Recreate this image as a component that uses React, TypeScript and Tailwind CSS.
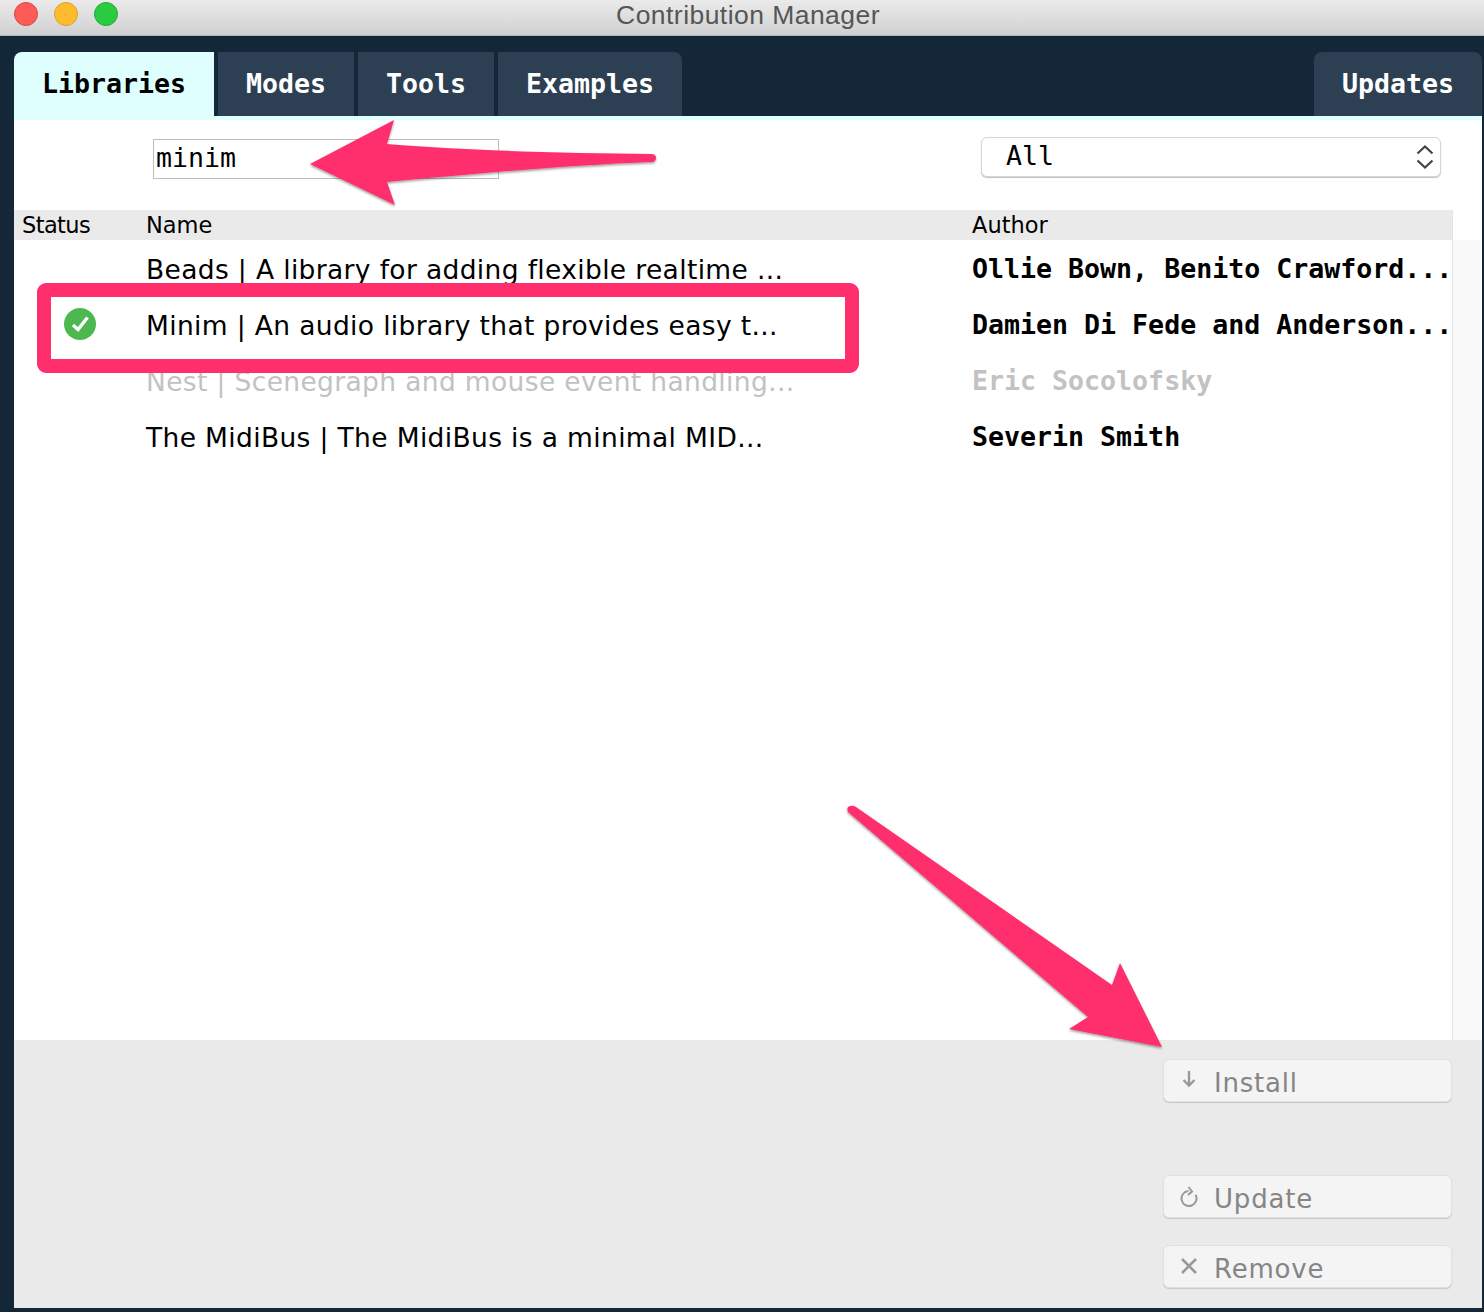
const uiFont = "font-['DejaVu_Sans',sans-serif]";
const monoFont = "font-['DejaVu_Sans_Mono',monospace]";

const rows = [
  {
    name: "Beads | A library for adding flexible realtime ...",
    author: "Ollie Bown, Benito Crawford...",
  },
  {
    name: "Minim | An audio library that provides easy t...",
    author: "Damien Di Fede and Anderson...",
    installed: true,
  },
  {
    name: "Nest | Scenegraph and mouse event handling...",
    author: "Eric Socolofsky",
    muted: true,
  },
  {
    name: "The MidiBus | The MidiBus is a minimal MID...",
    author: "Severin Smith",
  },
];

function Tab({
  label,
  width,
  active,
  first,
  last,
}: {
  label: string;
  width: string;
  active?: boolean;
  first?: boolean;
  last?: boolean;
}) {
  return (
    <div
      className={`flex items-center justify-center text-[26.6px] font-bold ${monoFont} ${width} ${
        active ? "h-[68px] bg-[#dfffff] pb-1 text-black" : "h-16 bg-[#2d4053] text-white"
      } ${first ? "rounded-tl-lg" : ""} ${last ? "rounded-tr-lg" : ""}`}
    >
      {label}
    </div>
  );
}

function ActionButton({
  label,
  icon,
  className,
}: {
  label: string;
  icon: React.ReactNode;
  className?: string;
}) {
  return (
    <div
      className={`flex h-[43px] w-[289px] items-center rounded-md border border-[#e0e0e0] bg-[#f4f4f4] shadow-[0_1px_1px_rgba(0,0,0,0.15)] ${className ?? ""}`}
    >
      <span className="flex w-[50px] justify-center">{icon}</span>
      <span className={`mt-1 text-[26px] leading-none tracking-[0.8px] text-[#858585] ${uiFont}`}>
        {label}
      </span>
    </div>
  );
}

function InstallIcon() {
  return (
    <svg width="20" height="20" viewBox="0 0 20 20" fill="none" stroke="#999" strokeWidth="2.4" className="-mt-1">
      <path d="M10 2 V16" />
      <path d="M4.5 11 L10 16.5 L15.5 11" />
    </svg>
  );
}

function UpdateIcon() {
  return (
    <svg width="20" height="22" viewBox="0 0 20 22" fill="none" stroke="#999" strokeWidth="2" className="-mt-[2px]">
      <path d="M9.5 6 A7.5 7.5 0 1 0 16.5 9.75" />
      <path d="M9.5 2 L13 6.5 L9 10" />
    </svg>
  );
}

function RemoveIcon() {
  return (
    <svg width="20" height="20" viewBox="0 0 20 20" fill="none" stroke="#999" strokeWidth="2.6" className="-mt-[1px]">
      <path d="M3 3 L17 17 M17 3 L3 17" />
    </svg>
  );
}

function Annotations() {
  return (
    <svg
      className="pointer-events-none absolute inset-0"
      width="1484"
      height="1312"
      viewBox="0 0 1484 1312"
    >
      <defs>
        <filter id="arrowShadow" x="-10%" y="-10%" width="120%" height="120%">
          <feDropShadow dx="0" dy="1.5" stdDeviation="1.2" floodColor="#000" floodOpacity="0.4" />
        </filter>
      </defs>
      <path
        filter="url(#arrowShadow)"
        fill="#ff2f6d"
        d="M310 164 L394 120 L387 144 C470 151 570 153 651 154 Q656 154 656 158 Q656 162 651 162 C570 165 470 174 387 182 L395 205 Z"
      />
      <path
        filter="url(#arrowShadow)"
        fill="#ff2f6d"
        d="M848 812 Q846 807 850 806 Q853 805 856 807 L1112 985 L1120 963 L1162 1047 L1069 1029 L1088 1017 Z"
      />
      <rect x="44" y="290" width="808" height="76" rx="2" fill="none" stroke="#ff2f6d" strokeWidth="14" />
    </svg>
  );
}

export default function App() {
  return (
    <div className="relative flex h-[1312px] w-[1484px] flex-col overflow-hidden bg-[#132739]">
      {/* title bar */}
      <div className="relative flex h-9 shrink-0 items-center justify-center border-b border-[#b5b5b5] bg-gradient-to-b from-[#ebebeb] to-[#d0d0d0]">
        <div className="absolute left-[14px] top-[2px] flex gap-4">
          <span className="size-6 rounded-full border border-[#e2463f] bg-[#fc5b57]" />
          <span className="size-6 rounded-full border border-[#e1a02a] bg-[#fdbc2e]" />
          <span className="size-6 rounded-full border border-[#25a93a] bg-[#29cb41]" />
        </div>
        <span className="ml-3 -mt-[5px] font-['Liberation_Sans',sans-serif] text-[26.5px] leading-[30px] tracking-[0.45px] text-[#565656]">
          Contribution Manager
        </span>
      </div>

      {/* tabs */}
      <div className="mt-4 flex h-[68px] shrink-0 pl-[14px] pr-[2px]">
        <Tab label="Libraries" width="w-[200px]" active first />
        <div className="ml-1 flex gap-1">
          <Tab label="Modes" width="w-[136px]" />
          <Tab label="Tools" width="w-[136px]" />
          <Tab label="Examples" width="w-[184px]" last />
        </div>
        <div className="ml-auto h-16 w-[168px] overflow-hidden rounded-t-lg">
          <Tab label="Updates" width="w-[168px]" />
        </div>
      </div>

      <div className="ml-[14px] mr-[2px] flex flex-1 flex-col">
        <div className="absolute left-[214px] top-[116px] h-1 w-[1268px] bg-[#dfffff]" />

        {/* search and filter */}
        <div className="flex h-[90px] shrink-0 items-start bg-white">
          <div
            className={`ml-[139px] mt-[19px] flex h-10 w-[346px] items-center border border-[#bdbdbd] pb-[2px] pl-[2px] text-[26.6px] text-black ${monoFont}`}
          >
            minim
          </div>
          <div
            className={`ml-[482px] mt-[17px] flex h-10 w-[460px] items-center justify-between rounded-md border border-[#d5d5d5] bg-white pl-6 pr-[6px] text-[26.6px] text-black shadow-[0_1px_1px_rgba(0,0,0,0.25)] ${monoFont}`}
          >
            <span className="-mt-[2px]">All</span>
            <svg width="18" height="26" viewBox="0 0 18 26" fill="none" stroke="#444" strokeWidth="2.2">
              <path d="M1.5 9.5 L9 2.5 L16.5 9.5" />
              <path d="M1.5 16.5 L9 23.5 L16.5 16.5" />
            </svg>
          </div>
        </div>

        {/* table */}
        <div className="flex min-h-0 flex-1">
          <div className="flex w-[1439px] flex-col border-r border-[#e4e4e4] bg-white">
            <div
              className={`grid h-[30px] shrink-0 grid-cols-[132px_826px_1fr] items-center bg-[#eaeaea] text-[22.5px] leading-none text-black ${uiFont}`}
            >
              <span className="pl-2 tracking-[-0.6px]">Status</span>
              <span>Name</span>
              <span>Author</span>
            </div>
            {rows.map((row) => (
              <div
                key={row.name}
                className="grid h-14 shrink-0 grid-cols-[132px_826px_1fr] items-center"
              >
                <span className="pl-[50px]">
                  {row.installed && (
                    <svg width="32" height="32" viewBox="0 0 32 32">
                      <circle cx="16" cy="16" r="16" fill="#4cb84f" />
                      <path
                        d="M9 17 L14 21.5 L23.5 9.5"
                        fill="none"
                        stroke="#fff"
                        strokeWidth="3.4"
                      />
                    </svg>
                  )}
                </span>
                <span
                  className={`mt-1 whitespace-nowrap text-[26.5px] leading-none tracking-[0.35px] ${uiFont} ${
                    row.muted ? "text-[#c2c2c2]" : "text-black"
                  }`}
                >
                  {row.name}
                </span>
                <span
                  className={`mt-[2px] whitespace-nowrap text-[26.6px] font-bold leading-none ${monoFont} ${
                    row.muted ? "text-[#c2c2c2]" : "text-black"
                  }`}
                >
                  {row.author}
                </span>
              </div>
            ))}
          </div>
          <div className="flex flex-1 flex-col">
            <div className="h-[30px] bg-white" />
            <div className="flex-1 bg-[#f9f9f9]" />
          </div>
        </div>

        {/* actions */}
        <div className="flex h-[268px] shrink-0 flex-col items-end bg-[#eaeaea] pr-[30px] pt-[19px]">
          <ActionButton label="Install" icon={<InstallIcon />} />
          <ActionButton label="Update" className="mt-[73px]" icon={<UpdateIcon />} />
          <ActionButton label="Remove" className="mt-[27px]" icon={<RemoveIcon />} />
        </div>
      </div>
      <div className="h-1 shrink-0" />

      <Annotations />
    </div>
  );
}
